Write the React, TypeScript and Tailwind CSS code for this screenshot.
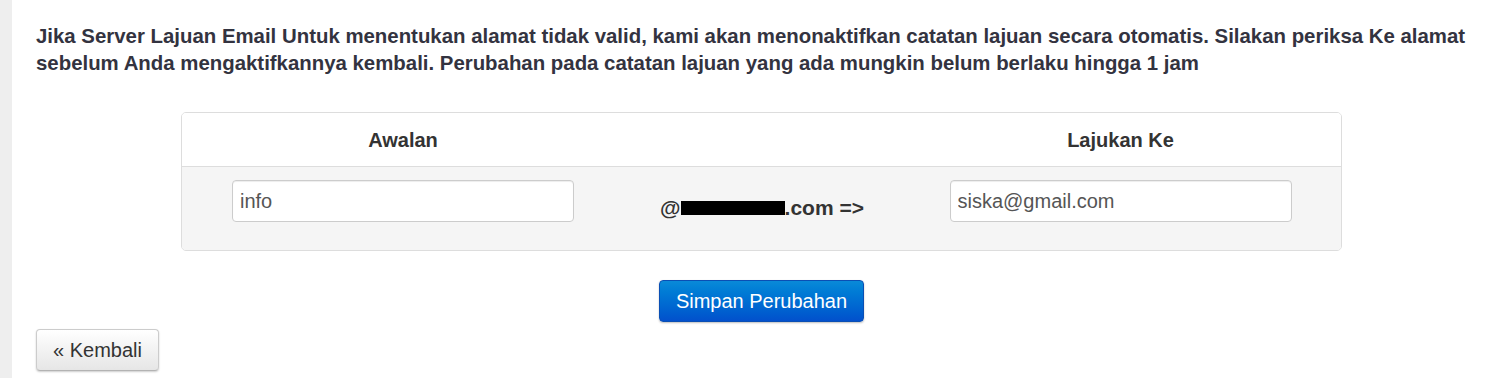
import React from 'react';

const font = { fontFamily: '"Liberation Sans", Arial, sans-serif' };

function Field({ value }: { value: string }) {
  return (
    <input
      readOnly
      value={value}
      className="w-[342px] h-[42px] pl-[7px] border border-[#cccccc] rounded-[4px] bg-white text-[20px] text-[#555555] shadow-[inset_0_1px_1px_rgba(0,0,0,0.075)] outline-none"
    />
  );
}

export default function App() {
  return (
    <div className="flex h-[378px] bg-white text-[#333333]" style={font}>
      <div className="w-[12px] shrink-0 bg-[#eeeeee]" />
      <div className="flex-1 pl-[24px] pt-[23px]">
        <p className="w-[1440px] text-[20.4px] leading-[27px] font-bold text-[#333340]">
          Jika Server Lajuan Email Untuk menentukan alamat tidak valid, kami akan menonaktifkan catatan lajuan secara otomatis. Silakan periksa Ke alamat sebelum Anda mengaktifkannya kembali. Perubahan pada catatan lajuan yang ada mungkin belum berlaku hingga 1 jam
        </p>

        <div className="ml-[145px] mt-[35px] w-[1161px]">
          <div className="border border-[#dddddd] rounded-[5px] overflow-hidden">
            <div className="grid grid-cols-[442px_276px_1fr] h-[54px] items-center bg-white border-b border-[#dddddd] text-[20px] font-bold">
              <div className="text-center">Awalan</div>
              <div />
              <div className="text-center">Lajukan Ke</div>
            </div>
            <div className="grid grid-cols-[442px_276px_1fr] h-[83px] bg-[#f5f5f5]">
              <div className="flex justify-center pt-[13px]">
                <Field value="info" />
              </div>
              <div className="flex justify-center items-start pt-[29px] text-[21px] leading-[24px] font-bold whitespace-nowrap">
                <span>@</span>
                <span className="inline-block w-[104px] h-[14px] mt-[5px] bg-black" />
                <span>.com =&gt;</span>
              </div>
              <div className="flex justify-center pt-[13px]">
                <Field value="siska@gmail.com" />
              </div>
            </div>
          </div>

          <div className="flex justify-center mt-[29px]">
            <button className="w-[205px] h-[42px] rounded-[4px] border border-[#0a4fb4] bg-gradient-to-b from-[#0a8ad8] to-[#0350cc] text-white text-[20px] shadow-[0_1px_2px_rgba(0,0,0,0.25)]">
              Simpan Perubahan
            </button>
          </div>
        </div>

        <button className="mt-[7px] w-[123px] h-[42px] rounded-[4px] border border-[#cccccc] border-b-[#b3b3b3] bg-gradient-to-b from-white to-[#e6e6e6] text-[20px] text-[#333333] text-left pl-[16px] shadow-[0_1px_2px_rgba(0,0,0,0.2)]">
          « Kembali
        </button>
      </div>
    </div>
  );
}
